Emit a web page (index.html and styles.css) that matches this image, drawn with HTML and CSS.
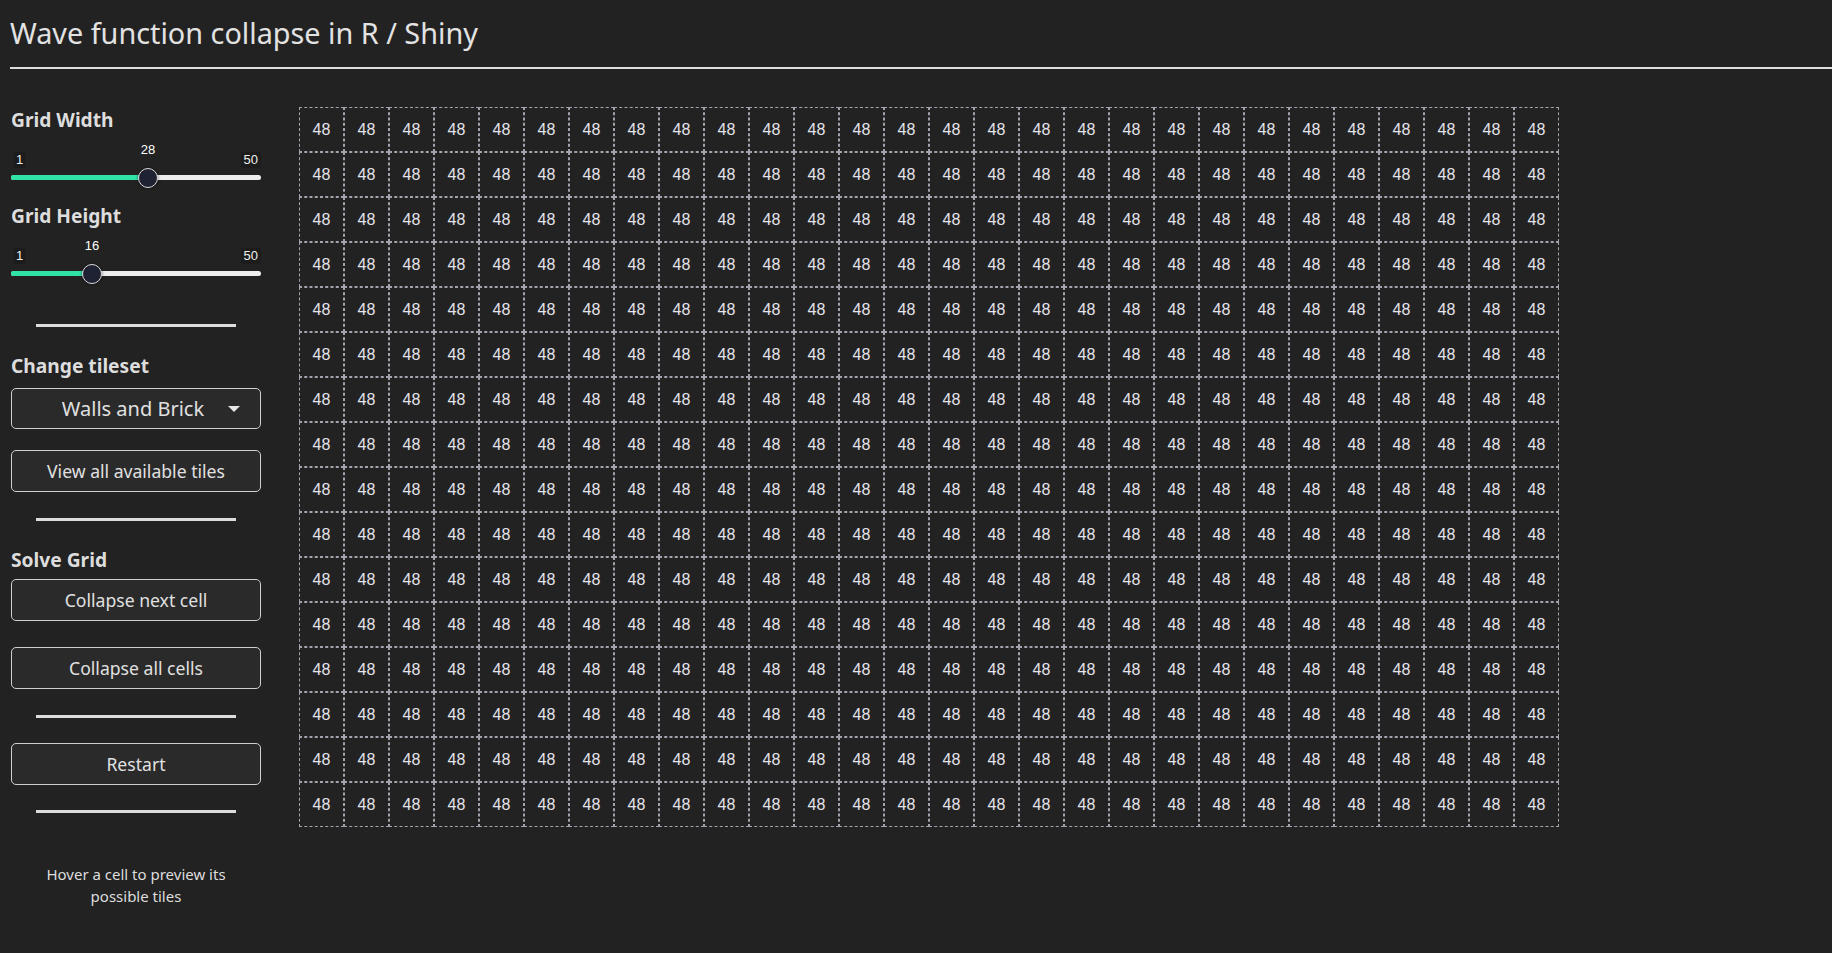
FILE: index.html
```html
<!DOCTYPE html>
<html>
<head>
<meta charset="utf-8">
<title>Wave function collapse in R / Shiny</title>
<link rel="stylesheet" href="styles.css">
</head>
<body>
<header class="header">
  <h2 class="title">Wave function collapse in R / Shiny</h2>
  <hr class="title-rule">
</header>
<div class="layout">
  <aside class="sidebar">
    <div class="label">Grid Width</div>
    <div class="slider">
      <span class="slider-min">1</span>
      <span class="slider-max">50</span>
      <div class="track"></div>
      <div class="fill" style="width: 137px"></div>
      <span class="slider-value" style="left: 137px">28</span>
      <div class="knob" style="left: 137px"></div>
    </div>
    <div class="label">Grid Height</div>
    <div class="slider">
      <span class="slider-min">1</span>
      <span class="slider-max">50</span>
      <div class="track"></div>
      <div class="fill" style="width: 81px"></div>
      <span class="slider-value" style="left: 81px">16</span>
      <div class="knob" style="left: 81px"></div>
    </div>
    <hr class="side-rule rule-1">
    <div class="label label-tileset">Change tileset</div>
    <div class="select">
      <span class="select-text">Walls and Brick</span>
      <span class="caret"></span>
    </div>
    <button class="btn btn-view">View all available tiles</button>
    <hr class="side-rule rule-2">
    <div class="label label-solve">Solve Grid</div>
    <button class="btn btn-next">Collapse next cell</button>
    <button class="btn btn-all">Collapse all cells</button>
    <hr class="side-rule rule-3">
    <button class="btn btn-restart">Restart</button>
    <hr class="side-rule rule-4">
    <p class="hint">Hover a cell to preview its<br>possible tiles</p>
  </aside>
  <main class="grid" id="grid"></main>
</div>
<script src="script.js"></script>
</body>
</html>
```

FILE: styles.css
```css
* { box-sizing: border-box; }
html, body {
  margin: 0;
  padding: 0;
  background: #222222;
  color: #dddddd;
  font-family: "Noto Sans", "Open Sans", sans-serif;
}
.header {
  padding: 16px 0 0 10px;
}
.title {
  margin: 0;
  font-size: 28.8px;
  line-height: 33px;
  font-weight: 400;
  color: #e2e2e2;
}
.title-rule {
  margin: 18px 0 0 0;
  border: 0;
  border-top: 2px solid #dddddd;
  height: 0;
}
.layout {
  display: flex;
  align-items: flex-start;
  padding: 0 10px 0 11px;
}
.sidebar {
  width: 250px;
  flex: none;
  padding-top: 39px;
}
.label {
  font-size: 19.2px;
  line-height: 24px;
  font-weight: 700;
  color: #dddddd;
}
.slider {
  position: relative;
  height: 72px;
  font-family: "Liberation Sans", Arial, sans-serif;
  font-size: 13px;
}
.slider-min, .slider-max {
  position: absolute;
  top: 20px;
  line-height: 16px;
  padding: 0 3px;
  background: #1c1c1c;
  border-radius: 3px;
  color: #eeeeee;
}
.slider-min { left: 2px; }
.slider-max { right: 0; }
.track {
  position: absolute;
  left: 0;
  right: 0;
  top: 43px;
  height: 5px;
  border-radius: 3px;
  background: #eeeeee;
}
.fill {
  position: absolute;
  left: 0;
  top: 43px;
  height: 5px;
  border-radius: 3px 0 0 3px;
  background: #2fe3a9;
}
.slider-value {
  position: absolute;
  top: 10px;
  line-height: 16px;
  transform: translateX(-50%);
  color: #ffffff;
}
.knob {
  position: absolute;
  top: 36px;
  width: 20px;
  height: 20px;
  margin-left: -10px;
  border-radius: 50%;
  background: #1f2233;
  border: 1.5px solid #dcdcdc;
  box-shadow: 0 0 3px rgba(0,0,0,0.6);
}
.side-rule {
  display: block;
  width: 200px;
  height: 0;
  border: 0;
  border-top: 3px solid #dddddd;
  margin: 0 auto;
}
.rule-1 { margin-top: 24px; }
.label-tileset { margin-top: 27px; }
.select {
  margin-top: 10px;
  height: 41px;
  border: 1px solid #cfcfcf;
  border-radius: 5px;
  background: #2a2a2a;
  display: flex;
  align-items: center;
  justify-content: center;
  position: relative;
  padding-right: 10px;
  padding-left: 4px;
  font-size: 20px;
  color: #e0e0e0;
}
.caret {
  position: absolute;
  right: 20px;
  top: 17px;
  width: 0;
  height: 0;
  border-left: 6px solid transparent;
  border-right: 6px solid transparent;
  border-top: 6px solid #e6e6e6;
}
.btn {
  display: block;
  width: 100%;
  height: 42px;
  border: 1px solid #cfcfcf;
  border-radius: 5px;
  background: #2a2a2a;
  color: #e0e0e0;
  font-family: "Noto Sans", "Open Sans", sans-serif;
  font-size: 17.6px;
  padding: 0;
}
.btn-view { margin-top: 21px; }
.rule-2 { margin-top: 26px; }
.label-solve { margin-top: 27px; }
.btn-next { margin-top: 7px; }
.btn-all { margin-top: 26px; }
.rule-3 { margin-top: 26px; }
.btn-restart { margin-top: 25px; }
.rule-4 { margin-top: 25px; }
.hint {
  margin: 50px 0 0 0;
  text-align: center;
  font-size: 15px;
  line-height: 22px;
  color: #dddddd;
}
.grid {
  margin-left: 38px;
  margin-top: 38px;
  display: grid;
  grid-template-columns: repeat(28, 45px);
  grid-auto-rows: 45px;
}
.cell {
  border: 1px dashed #a3a3ad;
  display: flex;
  align-items: center;
  justify-content: center;
  font-family: "Liberation Sans", Arial, sans-serif;
  font-size: 16px;
  color: #e4e4ec;
}
```

FILE: script.js
```js
var grid = document.getElementById('grid');
var html = '';
for (var i = 0; i < 28 * 16; i++) {
  html += '<div class="cell">48</div>';
}
grid.innerHTML = html;
```
